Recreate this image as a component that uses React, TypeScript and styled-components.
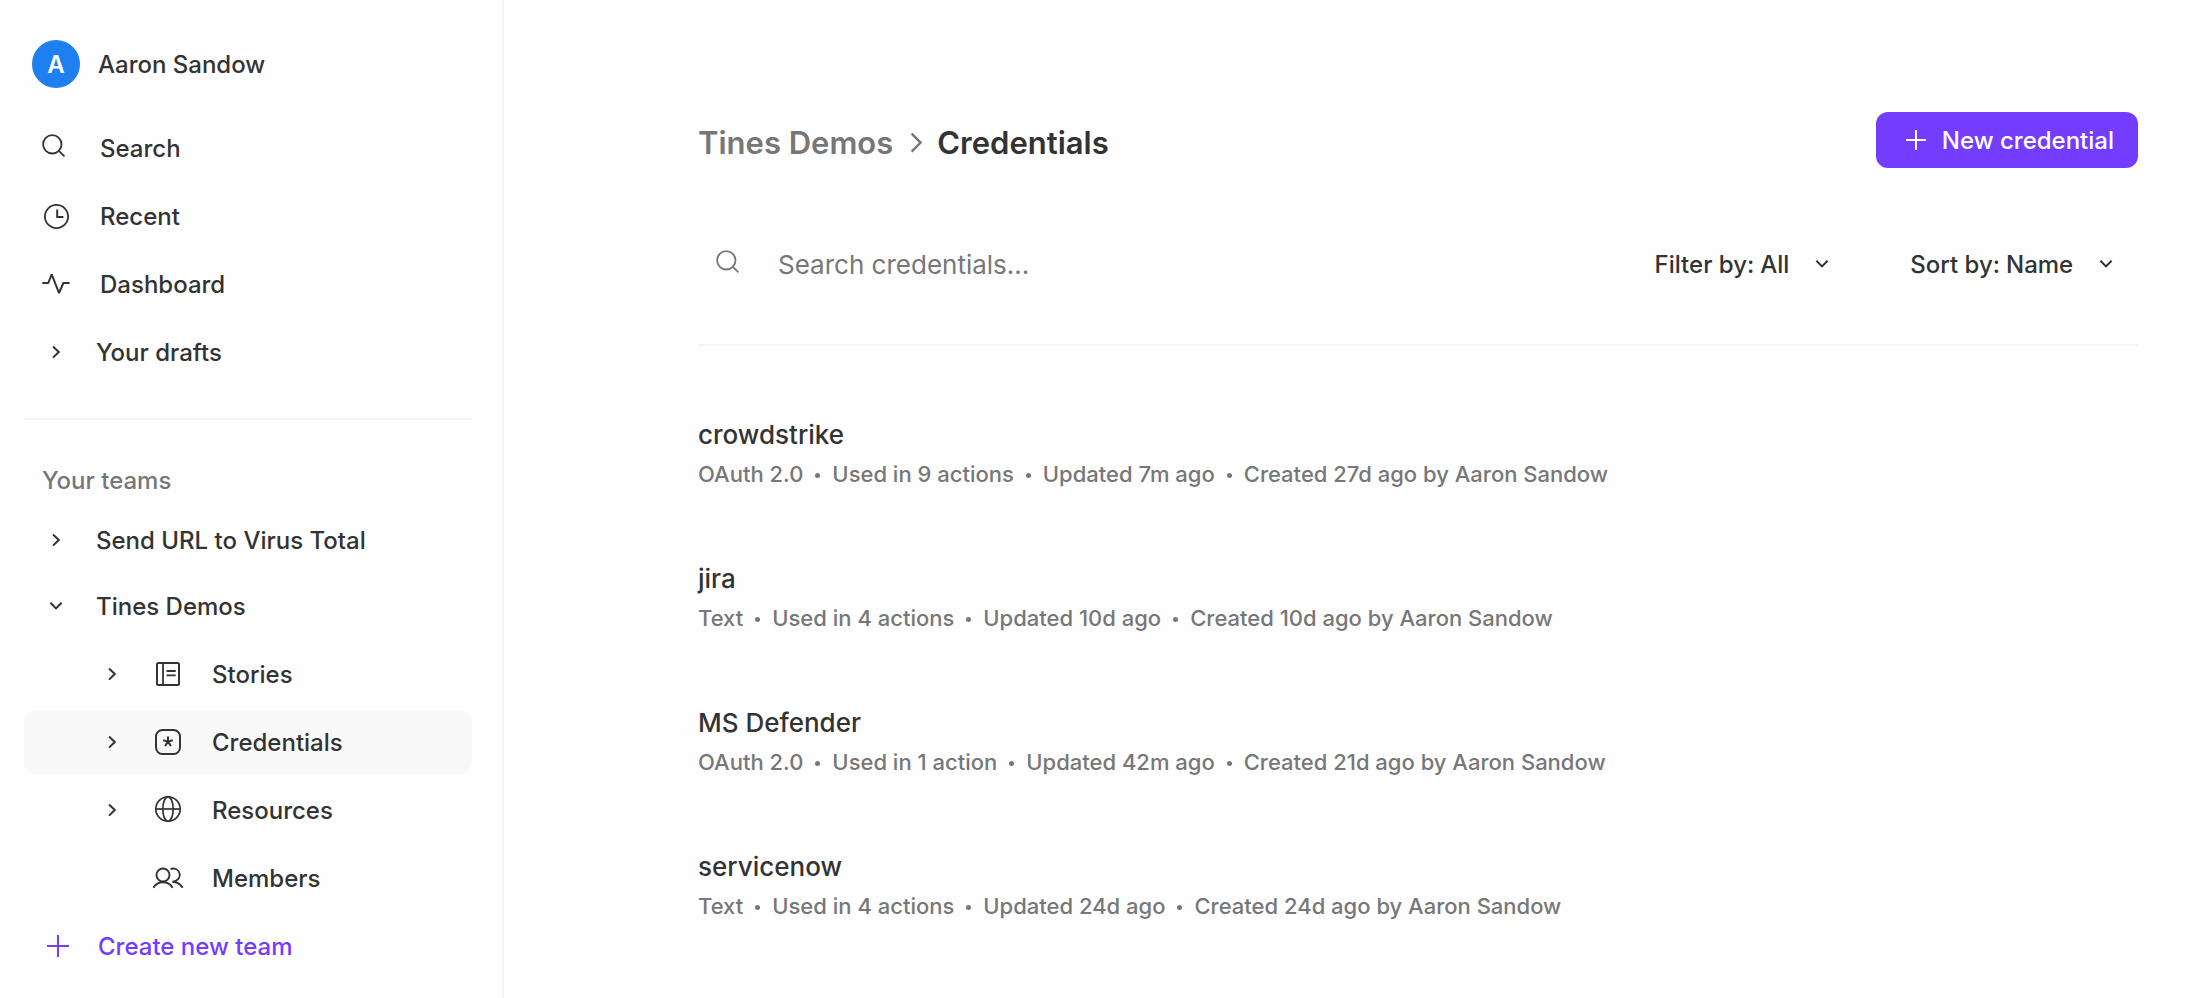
import React from "react";
import styled, { createGlobalStyle } from "styled-components";

const ink = "#333333";
const muted = "#777777";
const line = "#f5f5f5";
const accent = "#743cff";

const GlobalStyle = createGlobalStyle`
  *, *::before, *::after { box-sizing: border-box; }
  body {
    margin: 0;
    background: #fefefe;
    color: ${ink};
    font-family: Inter, "Liberation Sans", sans-serif;
    font-size: 24px;
    font-weight: 500;
    line-height: 32px;
    -webkit-font-smoothing: antialiased;
  }
  h1, p, ul, ol { margin: 0; padding: 0; }
  ul, ol { list-style: none; }
  a { color: inherit; text-decoration: none; }
  button, input, select { font: inherit; color: inherit; }
`;

const Page = styled.div`
  display: flex;
  min-height: 100vh;
`;

const Label = styled.span`
  padding-top: 2px;
`;

/* Sidebar */

const Sidebar = styled.aside`
  flex: none;
  width: 504px;
  padding: 32px 30px 20px 24px;
  border-right: 2px solid ${line};
`;

const Profile = styled.a`
  display: flex;
  align-items: center;
  gap: 18px;
  height: 64px;
  margin-bottom: 20px;
  padding-left: 8px;
`;

const Avatar = styled.span`
  display: flex;
  align-items: center;
  justify-content: center;
  width: 48px;
  height: 48px;
  border-radius: 50%;
  background: #1e80f0;
  color: #ffffff;
  font-weight: 600;
`;

const NavList = styled.ul`
  display: flex;
  flex-direction: column;
  gap: 4px;
`;

const TeamList = styled(NavList)`
  gap: 2px;
`;

const SubList = styled(NavList)`
  padding: 4px 0;
`;

const NavRow = styled.a<{ $gap?: number; $nested?: boolean; $active?: boolean }>`
  display: flex;
  align-items: center;
  gap: ${(p) => p.$gap ?? 28}px;
  height: 64px;
  padding: 0 16px 0 ${(p) => (p.$nested ? 72 : 16)}px;
  border-radius: 12px;
  background: ${(p) => (p.$active ? "#f9f9f9" : "transparent")};
`;

const CreateTeam = styled.button`
  display: flex;
  align-items: center;
  gap: 26px;
  width: 100%;
  height: 64px;
  padding: 0 16px;
  border: 0;
  background: none;
  color: ${accent};
  cursor: pointer;
`;

const ParentIcons = styled.span`
  display: flex;
  gap: 24px;
`;

const Divider = styled.hr`
  height: 2px;
  margin: 34px 0 45px;
  border: 0;
  background: ${line};
`;

const TeamsLabel = styled.p`
  margin-bottom: 11px;
  padding-left: 18px;
  color: ${muted};
`;

/* Main column */

const Main = styled.main`
  flex: 1;
  min-width: 0;
  padding: 112px 64px 0 194px;
`;

const Header = styled.header`
  display: flex;
  align-items: center;
  justify-content: space-between;
  gap: 24px;
`;

const Breadcrumb = styled.nav`
  display: flex;
  align-items: center;
  gap: 6px;
  padding-top: 6px;
  font-size: 31px;
  font-weight: 600;
  line-height: 40px;
`;

const BreadcrumbLink = styled.a`
  color: ${muted};
`;

const BreadcrumbTitle = styled.h1`
  font: inherit;
`;

const NewButton = styled.button`
  display: flex;
  align-items: center;
  gap: 10px;
  height: 56px;
  padding: 0 24px;
  border: 0;
  border-radius: 12px;
  background: ${accent};
  color: #ffffff;
  white-space: nowrap;
  cursor: pointer;
`;

const Toolbar = styled.div`
  display: flex;
  align-items: center;
  gap: 56px;
  height: 162px;
  margin-top: 16px;
  border-bottom: 2px solid ${line};
`;

const SearchField = styled.label`
  display: flex;
  flex: 1;
  align-items: center;
  gap: 32px;
  min-width: 0;
  padding-left: 16px;
  color: ${muted};
`;

const SearchInput = styled.input`
  flex: 1;
  min-width: 0;
  height: 40px;
  padding: 0;
  border: 0;
  outline: 0;
  background: none;
  font-size: 26px;
  font-weight: 400;

  &::placeholder {
    color: ${muted};
    opacity: 1;
  }
`;

const Picker = styled.label`
  display: flex;
  align-items: center;
  gap: 6px;
  padding-right: 16px;
  white-space: nowrap;
`;

const PickerSelect = styled.select`
  appearance: none;
  height: 40px;
  padding: 2px 0 0;
  border: 0;
  outline: 0;
  background: none;
  cursor: pointer;
`;

const PickerArrow = styled.span`
  display: flex;
  margin-left: 10px;
`;

const CredentialList = styled.ul`
  padding-top: 71px;
`;

const CredentialItem = styled.li`
  height: 144px;
`;

const CredentialName = styled.a`
  display: block;
  font-size: 26px;
  line-height: 36px;
`;

const Meta = styled.ul`
  display: flex;
  flex-wrap: wrap;
  margin-top: 5px;
  color: ${muted};
  font-size: 22px;
`;

const MetaPart = styled.li`
  display: flex;
  align-items: center;

  & + &::before {
    content: "";
    width: 5px;
    height: 5px;
    margin: 2px 12px 0;
    border-radius: 50%;
    background: currentColor;
  }
`;

/* Icons */

const Svg = styled.svg`
  display: block;
  flex: none;
  width: 32px;
  height: 32px;
  fill: none;
  stroke: currentColor;
  stroke-width: 2;
`;

type IconProps = { children: React.ReactNode };

const Icon = ({ children }: IconProps) => (
  <Svg viewBox="0 0 32 32" aria-hidden="true">
    {children}
  </Svg>
);

const SearchIcon = () => (
  <Icon>
    <circle cx="12.3" cy="12.3" r="9.2" strokeWidth="1.8" />
    <path d="M18.8 18.8 24.5 24.4" strokeWidth="1.8" />
  </Icon>
);

const ClockIcon = () => (
  <Icon>
    <circle cx="16.5" cy="16.5" r="11.6" strokeWidth="1.8" />
    <path d="M17.2 9.6V17h6.2" />
  </Icon>
);

const PulseIcon = () => (
  <Icon>
    <path d="M2.3 15h6L11.7 6.4 19 25l4.4-10h6.2" strokeWidth="2" strokeLinejoin="bevel" />
  </Icon>
);

const ChevronRight = () => (
  <Icon>
    <path d="M13 10.6 18.8 16 13 21.6" />
  </Icon>
);

const ChevronDown = () => (
  <Icon>
    <path d="M10.4 12.8 16 18.4 21.6 12.8" />
  </Icon>
);

const BreadcrumbChevron = () => (
  <Icon>
    <path d="M12.6 6.6 21.600 15.6 12.600 24.6" strokeWidth="2.4" />
  </Icon>
);

const PlusIcon = () => (
  <Icon>
    <path d="M18 5v22M7 16h22" />
  </Icon>
);

const SmallPlusIcon = () => (
  <Icon>
    <path d="M16 6v20M6 16h20" />
  </Icon>
);

const StoriesIcon = () => (
  <Icon>
    <rect x="5" y="5" width="22" height="22" rx="1.5" />
    <path d="M11 5v22M14.5 13h9.2M14.5 17.3h9.2" strokeWidth="1.8" />
  </Icon>
);

const CredentialIcon = () => (
  <Icon>
    <rect x="4" y="4" width="24" height="24" rx="6.5" />
    <path d="M16 15.6V10.6M16 15.6l4.8-1.4M16 15.6l-4.8-1.4M16 15.6l3 4.4M16 15.6l-3 4.4" />
  </Icon>
);

const GlobeIcon = () => (
  <Icon>
    <g strokeWidth="1.7">
      <circle cx="16" cy="15" r="12.2" />
      <ellipse cx="16" cy="15" rx="5.2" ry="12.2" />
      <path d="M4 15h24" />
    </g>
  </Icon>
);

const MembersIcon = () => (
  <Icon>
    <g strokeWidth="1.9">
      <circle cx="11" cy="13" r="6.5" />
      <path d="M1.4 25.8C3.4 22.4 6.8 20.3 11 20.3s7.6 2.1 9.6 5.5" />
      <path d="M18.6 7c1-.4 1.8-.5 2.6-.5a6.4 6.4 0 0 1 2.6 12.3c-1 .5-2 .8-3.4 1 4.6.2 8 2.3 10.2 6" />
    </g>
  </Icon>
);

/* Data */

const credentials = [
  {
    name: "crowdstrike",
    meta: ["OAuth 2.0", "Used in 9 actions", "Updated 7m ago", "Created 27d ago by Aaron Sandow"],
  },
  {
    name: "jira",
    meta: ["Text", "Used in 4 actions", "Updated 10d ago", "Created 10d ago by Aaron Sandow"],
  },
  {
    name: "MS Defender",
    meta: ["OAuth 2.0", "Used in 1 action", "Updated 42m ago", "Created 21d ago by Aaron Sandow"],
  },
  {
    name: "servicenow",
    meta: ["Text", "Used in 4 actions", "Updated 24d ago", "Created 24d ago by Aaron Sandow"],
  },
];

const shortcuts = [
  { label: "Search", icon: <SearchIcon />, gap: 28 },
  { label: "Recent", icon: <ClockIcon />, gap: 28 },
  { label: "Dashboard", icon: <PulseIcon />, gap: 28 },
  { label: "Your drafts", icon: <ChevronRight />, gap: 24 },
];

const teamPages = [
  { label: "Stories", icon: <StoriesIcon />, expandable: true },
  { label: "Credentials", icon: <CredentialIcon />, expandable: true, active: true },
  { label: "Resources", icon: <GlobeIcon />, expandable: true },
  { label: "Members", icon: <MembersIcon />, expandable: false },
];

export default function App() {
  return (
    <Page>
      <GlobalStyle />
      <Sidebar>
        <Profile href="#">
          <Avatar>
            <Label>A</Label>
          </Avatar>
          <Label>Aaron Sandow</Label>
        </Profile>
        <NavList>
          {shortcuts.map((item) => (
            <li key={item.label}>
              <NavRow href="#" $gap={item.gap}>
                {item.icon}
                <Label>{item.label}</Label>
              </NavRow>
            </li>
          ))}
        </NavList>
        <Divider />
        <TeamsLabel>Your teams</TeamsLabel>
        <TeamList>
          <li>
            <NavRow href="#" $gap={24}>
              <ChevronRight />
              <Label>Send URL to Virus Total</Label>
            </NavRow>
          </li>
          <li>
            <NavRow href="#" $gap={24}>
              <ChevronDown />
              <Label>Tines Demos</Label>
            </NavRow>
            <SubList>
              {teamPages.map((page) => (
                <li key={page.label}>
                  <NavRow href="#" $nested $active={page.active}>
                    <ParentIcons>
                      {page.expandable ? <ChevronRight /> : <Svg aria-hidden="true" />}
                      {page.icon}
                    </ParentIcons>
                    <Label>{page.label}</Label>
                  </NavRow>
                </li>
              ))}
            </SubList>
          </li>
        </TeamList>
        <CreateTeam type="button">
          <PlusIcon />
          <Label>Create new team</Label>
        </CreateTeam>
      </Sidebar>
      <Main>
        <Header>
          <Breadcrumb aria-label="Breadcrumb">
            <BreadcrumbLink href="#">Tines Demos</BreadcrumbLink>
            <BreadcrumbLink as="span">
              <BreadcrumbChevron />
            </BreadcrumbLink>
            <BreadcrumbTitle>Credentials</BreadcrumbTitle>
          </Breadcrumb>
          <NewButton type="button">
            <SmallPlusIcon />
            <Label>New credential</Label>
          </NewButton>
        </Header>
        <Toolbar>
          <SearchField>
            <SearchIcon />
            <SearchInput type="text" placeholder="Search credentials..." />
          </SearchField>
          <Picker>
            <Label>Filter by:</Label>
            <PickerSelect defaultValue="All">
              <option>All</option>
            </PickerSelect>
            <PickerArrow>
              <ChevronDown />
            </PickerArrow>
          </Picker>
          <Picker>
            <Label>Sort by:</Label>
            <PickerSelect defaultValue="Name">
              <option>Name</option>
            </PickerSelect>
            <PickerArrow>
              <ChevronDown />
            </PickerArrow>
          </Picker>
        </Toolbar>
        <CredentialList>
          {credentials.map((item) => (
            <CredentialItem key={item.name}>
              <CredentialName href="#">{item.name}</CredentialName>
              <Meta>
                {item.meta.map((part) => (
                  <MetaPart key={part}>{part}</MetaPart>
                ))}
              </Meta>
            </CredentialItem>
          ))}
        </CredentialList>
      </Main>
    </Page>
  );
}
